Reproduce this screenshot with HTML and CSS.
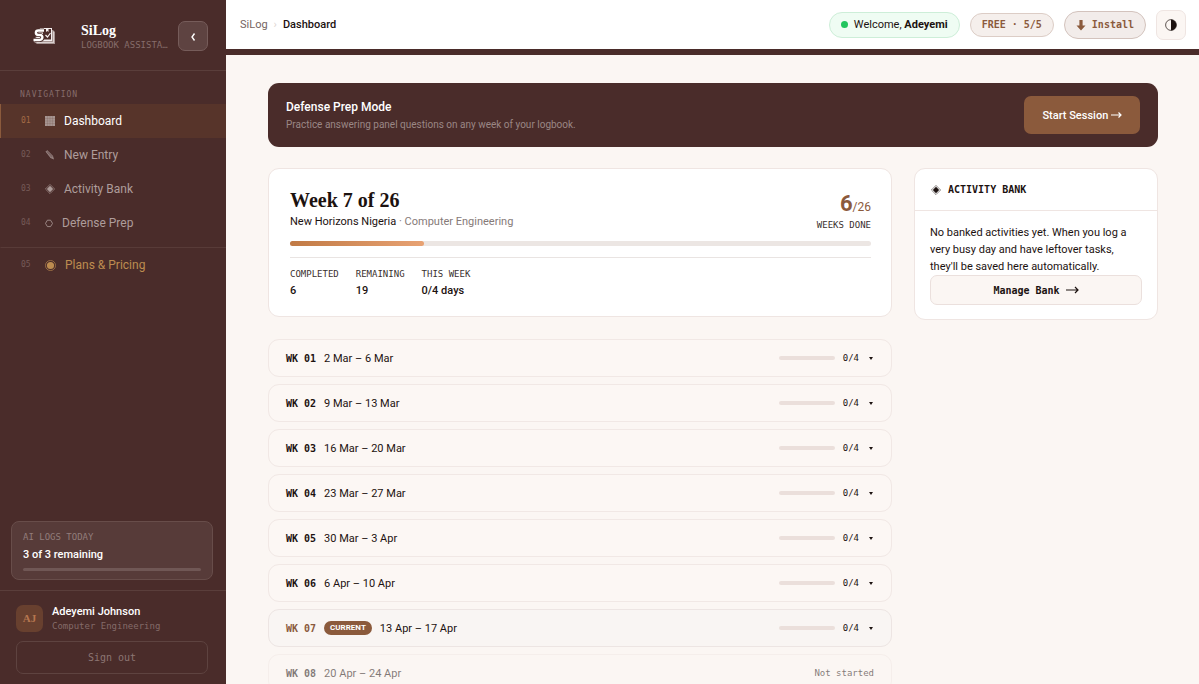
FILE: index.html
```html
<!DOCTYPE html>
<html lang="en">
<head>
  <meta charset="UTF-8" />
  <meta name="viewport" content="width=device-width, initial-scale=1.0"/>
  <title>SiLog - Dashboard</title>
  <link rel="stylesheet" href="styles.css">
</head>
<body>

  <aside class="sidebar">
    <div class="brand">
      <svg class="brand-logo" viewBox="0 0 24 20" aria-hidden="true">
        <path d="M6 4h15l2 2v12H5l-3-2z" fill="#a89694"/>
        <path d="M4 16h17V5l1 1v11H5z" fill="#d9cfce"/>
        <path d="M8 2h12v13H3z" fill="#f4eeee"/>
        <path d="M11 3h8v10.500h-8z" fill="#4a2c2a"/>
        <path d="M14 2.500h2.500v3.500l-1.200-1-1.300 1z" fill="#f4eeee"/>
        <path d="M13.500 9l2 2 3-4" fill="none" stroke="#f4eeee" stroke-width="1.200"/>
        <path d="M12 4.500H6.500C3 4.500 3 9 6.500 9h1.500c3.500 0 3 5-.5 5H2.500" fill="none" stroke="#4a2c2a" stroke-width="4.200"/>
        <path d="M12 4.500H6.500C3 4.500 3 9 6.500 9h1.500c3.500 0 3 5-.5 5H1.500" fill="none" stroke="#fff" stroke-width="2.400"/>
      </svg>
      <div class="brand-text">
        <div class="brand-name">SiLog</div>
        <div class="brand-sub">Logbook Assistant</div>
      </div>
      <button class="collapse-btn" type="button" aria-label="Collapse sidebar">
        <svg viewBox="0 0 6 8" width="6" height="8" aria-hidden="true"><path d="M4.500.5L2 4l2.500 3.500" fill="none" stroke="currentColor" stroke-width="1.400"/></svg>
      </button>
    </div>

    <nav class="nav">
      <div class="nav-label">Navigation</div>
      <a class="nav-item active" href="#">
        <span class="nav-num">01</span>
        <svg class="nav-icon" viewBox="0 0 10 10" aria-hidden="true"><path d="M0 0h10v10H0z" fill="currentColor"/><path d="M0 2.500h10M0 5h10M0 7.500h10M2.500 0v10M5 0v10M7.500 0v10" stroke="#57342a" stroke-width=".15"/></svg>
        Dashboard
      </a>
      <a class="nav-item" href="#">
        <span class="nav-num">02</span>
        <svg class="nav-icon" viewBox="0 0 10 10" aria-hidden="true"><path d="M.5 1.500L2.500.3 8 6l1 3.500L5.500 8z" fill="currentColor" opacity=".8"/><path d="M1.800 1.500l5 6M2.500 1l5 6" stroke="#4a2c2a" stroke-width=".4"/></svg>
        New Entry
      </a>
      <a class="nav-item" href="#">
        <span class="nav-num">03</span>
        <svg class="nav-icon" viewBox="0 0 10 10" aria-hidden="true"><path d="M5 .4L9.600 5 5 9.600.4 5z" fill="none" stroke="currentColor" stroke-width=".6"/><path d="M5 1.800L8.200 5 5 8.200 1.800 5z" fill="currentColor"/></svg>
        Activity Bank
      </a>
      <a class="nav-item" href="#">
        <span class="nav-num">04</span>
        <svg class="nav-icon nav-icon-sm" viewBox="0 0 8 10" aria-hidden="true"><path d="M2.400 2.200h3.200L7.500 5.400 5.600 8.600H2.400L.5 5.400z" fill="none" stroke="currentColor" stroke-width=".8"/></svg>
        Defense Prep
      </a>
      <a class="nav-item plans" href="#">
        <span class="nav-num">05</span>
        <svg class="nav-icon nav-icon-lg" viewBox="0 0 12 12" aria-hidden="true"><circle cx="6" cy="6" r="5.500" fill="none" stroke="currentColor" stroke-width=".7"/><circle cx="6" cy="6" r="3.900" fill="currentColor"/></svg>
        Plans &amp; Pricing
      </a>
    </nav>

    <div class="quota">
      <div class="quota-label">AI Logs Today</div>
      <div class="quota-value">3 of 3 remaining</div>
      <div class="quota-bar"></div>
    </div>

    <div class="account">
      <div class="user">
        <div class="avatar">AJ</div>
        <div>
          <div class="user-name">Adeyemi Johnson</div>
          <div class="user-course">Computer Engineering</div>
        </div>
      </div>
      <button class="signout" type="button">Sign out</button>
    </div>
  </aside>

  <div class="page">
    <header class="topbar">
      <div class="crumbs">
        <a href="#">SiLog</a>
        <span class="crumb-sep">›</span>
        <span class="crumb-here">Dashboard</span>
      </div>
      <div class="topbar-right">
        <div class="welcome"><span class="dot"></span><span>Welcome, <strong>Adeyemi</strong></span></div>
        <div class="plan">FREE · 5/5</div>
        <button class="install" type="button">
          <svg viewBox="0 0 10 12" width="10" height="12" aria-hidden="true"><path d="M3.400 1h3.200v5.500H9.500L5 11.500.5 6.500h2.900z" fill="currentColor"/></svg>
          Install
        </button>
        <button class="theme-btn" type="button" aria-label="Toggle theme">
          <svg viewBox="0 0 12 12" width="12" height="12" aria-hidden="true"><circle cx="6" cy="6" r="5.400" fill="none" stroke="currentColor" stroke-width=".7"/><path d="M6 .6a5.400 5.400 0 0 1 0 10.800z" fill="currentColor"/></svg>
        </button>
      </div>
    </header>

    <main class="content">
      <section class="banner">
        <div>
          <h2>Defense Prep Mode</h2>
          <p>Practice answering panel questions on any week of your logbook.</p>
        </div>
        <button class="start-btn" type="button">Start Session
          <svg viewBox="0 0 11 8" width="11" height="8" aria-hidden="true"><path d="M0 4h10M7.500 1.500L10 4 7.500 6.500" fill="none" stroke="currentColor" stroke-width="1.200"/></svg>
        </button>
      </section>

      <div class="columns">
        <div class="main-col">
          <section class="week-card">
            <div class="week-top">
              <div>
                <h1>Week 7 of 26</h1>
                <p class="place">New Horizons Nigeria <span>· Computer Engineering</span></p>
              </div>
              <div class="done">
                <div class="done-count"><strong>6</strong>/26</div>
                <div class="label">Weeks done</div>
              </div>
            </div>
            <div class="progress"><div class="progress-fill" style="width: 23%"></div></div>
            <dl class="stats">
              <div><dt class="label">Completed</dt><dd>6</dd></div>
              <div><dt class="label">Remaining</dt><dd>19</dd></div>
              <div><dt class="label">This week</dt><dd>0/4 days</dd></div>
            </dl>
          </section>

          <div class="weeks">
            <button class="week" type="button"><b>WK 01</b><span>2 Mar – 6 Mar</span><i class="mini"></i><span class="count">0/4</span><i class="caret"></i></button>
            <button class="week" type="button"><b>WK 02</b><span>9 Mar – 13 Mar</span><i class="mini"></i><span class="count">0/4</span><i class="caret"></i></button>
            <button class="week" type="button"><b>WK 03</b><span>16 Mar – 20 Mar</span><i class="mini"></i><span class="count">0/4</span><i class="caret"></i></button>
            <button class="week" type="button"><b>WK 04</b><span>23 Mar – 27 Mar</span><i class="mini"></i><span class="count">0/4</span><i class="caret"></i></button>
            <button class="week" type="button"><b>WK 05</b><span>30 Mar – 3 Apr</span><i class="mini"></i><span class="count">0/4</span><i class="caret"></i></button>
            <button class="week" type="button"><b>WK 06</b><span>6 Apr – 10 Apr</span><i class="mini"></i><span class="count">0/4</span><i class="caret"></i></button>
            <button class="week current" type="button"><b>WK 07</b><span class="badge">CURRENT</span><span>13 Apr – 17 Apr</span><i class="mini"></i><span class="count">0/4</span><i class="caret"></i></button>
            <button class="week upcoming" type="button"><b>WK 08</b><span>20 Apr – 24 Apr</span><span class="status">Not started</span></button>
          </div>
        </div>

        <section class="bank">
          <h3>
            <svg viewBox="0 0 10 10" width="10" height="10" aria-hidden="true"><path d="M5 .4L9.600 5 5 9.600.4 5z" fill="none" stroke="currentColor" stroke-width=".5"/><path d="M5 1.800L8.200 5 5 8.200 1.800 5z" fill="currentColor"/></svg>
            Activity Bank
          </h3>
          <div class="bank-body">
            <p>No banked activities yet. When you log a very busy day and have leftover tasks, they'll be saved here automatically.</p>
            <button class="bank-btn" type="button">Manage Bank
              <svg viewBox="0 0 13 8" width="13" height="8" aria-hidden="true"><path d="M0 4h12M9 1l3 3-3 3" fill="none" stroke="currentColor" stroke-width="1.200"/></svg>
            </button>
          </div>
        </section>
      </div>
    </main>
  </div>

</body>
</html>
```
FILE: styles.css
```css
:root {
  --brown: #4a2c2a;
  --accent: #8b5a3c;
  --cream: #fbf6f3;
  --line: #efe5e2;
  --sans: Roboto, "Noto Sans", sans-serif;
  --mono: "DejaVu Sans Mono", "Liberation Mono", monospace;
  --serif: "Liberation Serif", serif;
}
* {
  box-sizing: border-box;
}
body {
  margin: 0;
  height: 100vh;
  display: flex;
  overflow: hidden;
  font-family: var(--sans);
  font-size: 11px;
  color: #1c1210;
  background: var(--cream);
}
h1, h2, h3, p, dl, dd {
  margin: 0;
}
a {
  color: inherit;
  text-decoration: none;
}
button {
  font-family: inherit;
  color: inherit;
  cursor: pointer;
}

/* sidebar */
.sidebar {
  width: 226px;
  flex-shrink: 0;
  display: flex;
  flex-direction: column;
  background: var(--brown);
  color: #fff;
}
.brand {
  display: flex;
  align-items: center;
  height: 71px;
  padding: 2px 18px 0 32px;
  border-bottom: 1px solid #5a3e3b;
}
.brand-logo {
  width: 24px;
  height: 20px;
  margin-right: 25px;
}
.brand-text {
  flex: 1;
  min-width: 0;
  margin-right: 9px;
}
.brand-name {
  font: bold 14px/17px var(--serif);
}
.brand-sub {
  font: 9px/12px var(--mono);
  text-transform: uppercase;
  color: #866d6b;
  white-space: nowrap;
  overflow: hidden;
  text-overflow: ellipsis;
}
.collapse-btn {
  width: 30px;
  height: 30px;
  padding: 0;
  border: 1px solid #765c5a;
  border-radius: 7px;
  background: #5e4341;
}
.nav {
  flex: 1;
}
.nav-label {
  padding: 17px 20px 3px;
  font: 8px/13px var(--mono);
  letter-spacing: 1px;
  text-transform: uppercase;
  color: #866d6b;
}
.nav-item {
  display: flex;
  align-items: center;
  height: 34px;
  padding-left: 20px;
  border-left: 1px solid transparent;
  font-size: 12px;
  color: #ae9d9b;
}
.nav-item.active {
  background: #57342a;
  border-left-color: var(--accent);
  color: #fff;
}
.nav-num {
  width: 24px;
  font: 8px/12px var(--mono);
  color: #765b58;
}
.active .nav-num {
  color: #a36b45;
}
.nav-icon {
  width: 10px;
  height: 10px;
  margin-right: 9px;
}
.active .nav-icon {
  color: #a69490;
}
.nav-icon-sm {
  width: 8px;
}
.nav-icon-lg {
  width: 11px;
  height: 11px;
}
.plans {
  height: 35px;
  margin-top: 7px;
  border-top: 1px solid #583b38;
  color: #bd8c50;
}
.quota {
  margin: 0 13px 10px 11px;
  height: 59px;
  padding: 9px 11px;
  border: 1px solid #684d4a;
  border-radius: 8px;
  background: #573b39;
}
.quota-label {
  font: 9px/12px var(--mono);
  text-transform: uppercase;
  color: #927d7b;
}
.quota-value {
  margin: 4px 0 5px;
  font-size: 11px;
  line-height: 16px;
  font-weight: 500;
}
.quota-bar {
  height: 3px;
  border-radius: 2px;
  background: #705755;
}
.account {
  padding: 14px 18px 10px 16px;
  border-top: 1px solid #5a3e3b;
}
.user {
  display: flex;
  gap: 9px;
  margin-bottom: 8px;
}
.avatar {
  width: 27px;
  height: 27px;
  border-radius: 7px;
  background: #68402f;
  color: #b57650;
  font: bold 11px/27px var(--serif);
  text-align: center;
}
.user-name {
  font-size: 11px;
  line-height: 14px;
  font-weight: 500;
}
.user-course {
  font: 9px/14px var(--mono);
  color: #846b69;
}
.signout {
  display: block;
  width: 100%;
  height: 33px;
  border: 1px solid #5e4340;
  border-radius: 7px;
  background: transparent;
  color: #8c7573;
  font: 10px var(--mono);
}

/* top bar */
.page {
  flex: 1;
  min-width: 0;
  display: flex;
  flex-direction: column;
}
.topbar {
  display: flex;
  align-items: center;
  justify-content: space-between;
  height: 55px;
  flex-shrink: 0;
  padding: 0 13px 0 14px;
  background: #fff;
  border-bottom: 6px solid var(--brown);
}
.crumbs {
  display: flex;
  gap: 6px;
  color: #75635f;
}
.crumb-sep {
  color: #ded5d2;
}
.crumb-here {
  color: #1c1210;
  font-weight: 500;
}
.topbar-right {
  display: flex;
  align-items: center;
  gap: 10px;
}
.welcome {
  display: flex;
  align-items: center;
  gap: 6px;
  height: 26px;
  padding: 0 11px;
  border: 1px solid #cdeed8;
  border-radius: 13px;
  background: #effcf3;
}
.dot {
  width: 7px;
  height: 7px;
  border-radius: 50%;
  background: #22c55e;
}
.plan {
  padding: 0 11px;
  border: 1px solid #dccdc6;
  border-radius: 12px;
  background: #f5efec;
  color: var(--accent);
  font: bold 10px/22px var(--mono);
}
.install {
  display: flex;
  align-items: center;
  gap: 6px;
  height: 28px;
  padding: 0 11px;
  border: 1px solid #d3c3bd;
  border-radius: 14px;
  background: #f2ecea;
  color: var(--accent);
  font: bold 10px var(--mono);
}
.theme-btn {
  display: flex;
  align-items: center;
  justify-content: center;
  width: 30px;
  height: 30px;
  padding: 0;
  border: 1px solid var(--line);
  border-radius: 7px;
  background: var(--cream);
}

/* content */
.content {
  flex: 1;
  min-height: 0;
  padding: 28px 41px 28px 42px;
  overflow-y: auto;
  scrollbar-width: none;
}
.banner {
  display: flex;
  align-items: center;
  justify-content: space-between;
  height: 64px;
  padding: 0 18px;
  border-radius: 11px;
  background: var(--brown);
}
.banner h2 {
  font-size: 12px;
  line-height: 18px;
  font-weight: 500;
  color: #fff;
}
.banner p {
  font-size: 10px;
  line-height: 17px;
  color: #9a8785;
}
.start-btn {
  height: 38px;
  padding: 0 18px;
  border: 0;
  border-radius: 7px;
  background: var(--accent);
  color: #fff;
  font-size: 11px;
  font-weight: 500;
}
.columns {
  display: grid;
  grid-template-columns: 1fr 244px;
  align-items: start;
  gap: 22px;
  margin-top: 21px;
}
.week-card,
.bank {
  border: 1px solid var(--line);
  border-radius: 11px;
  background: #fff;
}
.week-card {
  padding: 18px 20px 15px 21px;
}
.week-top {
  display: flex;
  align-items: flex-end;
  justify-content: space-between;
}
h1 {
  font: bold 20px/26px var(--serif);
}
.place {
  line-height: 18px;
}
.place span {
  color: #857a78;
}
.done {
  text-align: right;
}
.done-count {
  font-size: 12px;
  line-height: 24px;
  color: var(--accent);
}
.done-count strong {
  font-size: 22px;
}
.label {
  font: 9px/12px var(--mono);
  text-transform: uppercase;
  color: #3a302e;
}
.progress {
  height: 5px;
  margin: 10px 0 11px;
  border-radius: 3px;
  background: #ece6e3;
}
.progress-fill {
  height: 100%;
  border-radius: 3px;
  background: linear-gradient(90deg, #c17a45, #e8a273);
}
.stats {
  display: flex;
  gap: 17px;
  padding-top: 10px;
  border-top: 1px solid #e9e4e2;
}
.stats dd {
  font-size: 11px;
  line-height: 21px;
  font-weight: 500;
}
.weeks {
  display: flex;
  flex-direction: column;
  gap: 7px;
  margin-top: 22px;
}
.week {
  display: flex;
  align-items: center;
  gap: 8px;
  height: 38px;
  padding: 0 17px;
  border: 1px solid #f1e8e5;
  border-radius: 11px;
  background: #fcf7f4;
  font-size: 11px;
}
.week b {
  font: bold 10px var(--mono);
}
.week.current {
  border-color: #ede5e3;
  background: #f9f5f3;
}
.current b {
  color: var(--accent);
}
.badge {
  padding: 0 6px;
  border-radius: 7px;
  background: var(--accent);
  color: #fff;
  font: bold 8px/14px var(--sans);
}
.mini {
  width: 56px;
  height: 4px;
  margin-left: auto;
  border-radius: 2px;
  background: #ebdfdb;
}
.count,
.status {
  font: 9px var(--mono);
}
.caret {
  margin: 0 1px 0 2px;
  border: 2px solid transparent;
  border-top: 3px solid #1c1210;
  border-bottom: 0;
}
.upcoming {
  opacity: .55;
}
.status {
  margin-left: auto;
}
.bank h3 {
  display: flex;
  align-items: center;
  gap: 7px;
  height: 42px;
  padding: 0 16px;
  border-bottom: 1px solid var(--line);
  font: bold 10px var(--mono);
  text-transform: uppercase;
}
.bank-body {
  padding: 13px 15px 14px;
}
.bank-body p {
  line-height: 17px;
}
.bank-btn {
  width: 100%;
  height: 30px;
  border: 1px solid #ebe0dd;
  border-radius: 7px;
  background: var(--cream);
  font: bold 10px var(--mono);
}
```
